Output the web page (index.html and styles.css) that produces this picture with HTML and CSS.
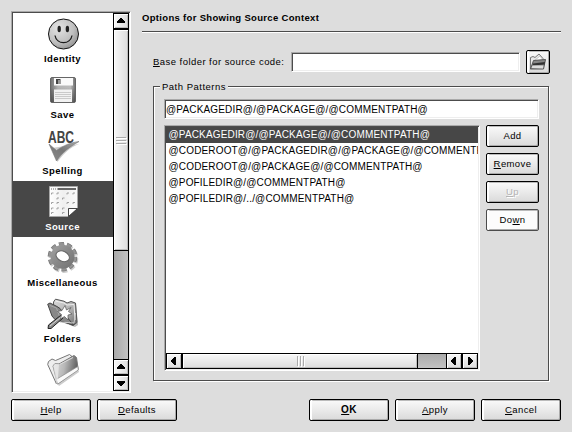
FILE: index.html
```html
<!DOCTYPE html>
<html lang="en">
<head>
<meta charset="utf-8">
<title>Options for Showing Source Context</title>
<link rel="stylesheet" href="styles.css">
</head>
<body>
<div class="dialog">
  <div class="main">
    <div class="sunken sidebar">
      <div class="pages">
        <div class="page">
          <svg class="icon" viewBox="0 0 32 32">
            <defs><radialGradient id="face" cx=".35" cy=".3" r=".8"><stop offset="0" stop-color="#e4e4e4"/><stop offset=".6" stop-color="#c0c0c0"/><stop offset="1" stop-color="#8c8c8c"/></radialGradient></defs>
            <circle cx="16.5" cy="16" r="15" fill="url(#face)" stroke="#111"/>
            <ellipse cx="12.2" cy="11" rx="1.7" ry="3.3" fill="#222"/><ellipse cx="20.4" cy="11" rx="1.7" ry="3.3" fill="#222"/>
            <path d="M8 17.5C9.5 27 23.500 27 25 17.500" fill="none" stroke="#1a1a1a" stroke-width="1.300"/>
          </svg>
          <span class="name">Identity</span>
        </div>
        <div class="page">
          <svg class="icon" viewBox="0 0 32 32">
            <defs><linearGradient id="disk" x1="0" y1="0" x2="1" y2="0"><stop offset="0" stop-color="#707070"/><stop offset=".3" stop-color="#b4b4b4"/><stop offset=".8" stop-color="#bcbcbc"/><stop offset="1" stop-color="#6a6a6a"/></linearGradient>
            <linearGradient id="diskShade" x1="0" y1="0" x2="0" y2="1"><stop offset=".4" stop-color="#333" stop-opacity="0"/><stop offset="1" stop-color="#333" stop-opacity=".55"/></linearGradient></defs>
            <rect x="3.500" y="3.500" width="25" height="25" rx="1.500" fill="url(#disk)" stroke="#666"/>
            <rect x="4" y="4" width="24" height="24" fill="url(#diskShade)"/>
            <rect x="7" y="4" width="19" height="7.500" fill="#fafafa"/>
            <path d="M9 5h4.500v5H9z" fill="#444"/><path d="M11 6h2.500v4H11z" fill="#999"/>
            <rect x="7" y="15.500" width="18" height="12.500" fill="#f2f2f2"/>
            <path d="M8 18.500h16M8 20.500h16M8 22.500h16M8 24.500h16" stroke="#cacaca"/>
          </svg>
          <span class="name">Save</span>
        </div>
        <div class="page">
          <svg class="icon" viewBox="0 0 32 32">
            <defs><linearGradient id="tick" x1="0" y1="1" x2="1" y2="0"><stop offset="0" stop-color="#8c8c8c"/><stop offset=".5" stop-color="#777"/><stop offset="1" stop-color="#aaa"/></linearGradient></defs>
            <path d="M4.500 18L10.500 32L12 30C17 23 24 17 32 14z" fill="#ccc"/>
            <path d="M2 14L9.500 20.500C16 15.500 24 12.500 32 11.500C23 16.500 15 22.500 9.500 31z" fill="url(#tick)" stroke="#777" stroke-width=".6"/>
            <text class="abc" x="1" y="13" textLength="26" lengthAdjust="spacingAndGlyphs">ABC</text>
          </svg>
          <span class="name">Spelling</span>
        </div>
        <div class="page selected">
          <svg class="icon" viewBox="0 0 32 32">
            <defs><linearGradient id="sheet" x1="0" y1="0" x2="1" y2="0"><stop offset="0" stop-color="#fff"/><stop offset=".5" stop-color="#f0f0f0"/><stop offset="1" stop-color="#fafafa"/></linearGradient></defs>
            <path d="M2.500.500H30.500V22.500L21.500 30.500H2.500z" fill="url(#sheet)" stroke="#a8a8a8"/>
            <path d="M4 3H13" stroke="#999" stroke-width="1.500" stroke-dasharray="1 1"/><path d="M11 3H29" stroke="#666" stroke-width="2"/>
            <path d="M4.500 8.500v-1.500h2M10 8.500v-1.500h2M20 8.500v-1.500h2M26 8.500v-1.500h2M10 13.500v-1.500h2M15.500 13.500v-1.500h2M4.500 18v-1.500h2M10 18v-1.500h2M20 18v-1.500h2M26 18v-1.500h2M4.500 23.500v-1.500h2M10 23.500v-1.500h2M15.500 23.500v-1.500h2M4.500 28v-1.500h2M15.500 28v-1.500h2" fill="none" stroke="#999" stroke-width=".9"/>
            <path d="M21.500 30.500V22.500H30.500V31H21.500z" fill="#474747"/>
            <path d="M21.500 30.500V22.500H30.500z" fill="#fff" stroke="#333" stroke-width=".9"/>
          </svg>
          <span class="name">Source</span>
        </div>
        <div class="page">
          <svg class="icon" viewBox="0 0 32 32">
            <defs><linearGradient id="cog" x1="0" y1="0" x2="1" y2="1"><stop offset="0" stop-color="#a4a4a4"/><stop offset=".5" stop-color="#888"/><stop offset="1" stop-color="#707070"/></linearGradient></defs>
            <g transform="translate(15.500 14.700)">
              <circle cx="1" cy="1.500" r="12.300" fill="none" stroke="#ccc" stroke-width="5" stroke-dasharray="4.730 3"/>
              <circle r="12.300" fill="none" stroke="#747474" stroke-width="5" stroke-dasharray="4.730 3"/>
              <circle r="12.300" fill="none" stroke="#949494" stroke-width="3.600" stroke-dasharray="4 3.730" stroke-dashoffset="-.3"/>
              <circle r="12" fill="url(#cog)"/>
              <ellipse rx="7" ry="5" cy="-.5" transform="rotate(25)" fill="#fff" stroke="#666"/>
            </g>
          </svg>
          <span class="name">Miscellaneous</span>
        </div>
        <div class="page">
          <svg class="icon" viewBox="0 0 32 32">
            <defs><linearGradient id="wf" x1="0" y1="0" x2="1" y2="1"><stop offset="0" stop-color="#ddd"/><stop offset=".6" stop-color="#aaa"/><stop offset="1" stop-color="#666"/></linearGradient></defs>
            <path d="M8 4L10 1.500L17 3.500L21 5L25 3.500L29 6L31 27L28 29L9 22z" fill="#bbb"/>
            <path d="M6.500 4L8.500 1.200L17 3.200L20 5L24 3.500L28.500 5L30 24.500L26 27.500L7 19z" fill="url(#wf)" stroke="#555"/>
            <path d="M8.500 3L17 5L20 7L27 6.500L28 22" fill="none" stroke="#eee"/>
            <path d="M.700 6.200L3 5L10 8.500L13 10.500L26.500 27L8 21.500L5 18z" fill="#888" stroke="#444"/>
            <path d="M3 7.500L9.500 10L13 20" fill="none" stroke="#aaa"/>
            <path d="M13 24L27 25L28.500 15" fill="none" stroke="#ccc"/>
            <path d="M1 30.500L1.500 27L13.500 17.500L16 20L4 30.500z" fill="#888" stroke="#222"/>
            <path d="M3 28L14 19" stroke="#d4d4d4"/>
            <path d="M18 7.500L19.500 12L24 9.500L21.500 13.500L25 16L21 17L21 22L17.500 18.500L13.500 21L14.500 16.500L10.500 13.500L15 12.500z" fill="#fff" stroke="#555" stroke-width=".7"/>
          </svg>
          <span class="name">Folders</span>
        </div>
        <div class="page">
          <svg class="icon" viewBox="0 0 32 32">
            <defs><linearGradient id="fold" x1="0" y1=".3" x2="1" y2=".5"><stop offset="0" stop-color="#ddd"/><stop offset=".45" stop-color="#b8b8b8"/><stop offset="1" stop-color="#555"/></linearGradient></defs>
            <path d="M12 32L32 18L31 15L10 29z" fill="#ccc"/>
            <path d="M9.500 30L.700 10.500L1.500 7.500L5 5L8.500 6.500L22.500.500L25 2.500L12 14z" fill="#eee" stroke="#777"/>
            <path d="M6 12L8 9.500L12 10L27 1.500L29.500 3.500L31.200 15.500L10.500 30z" fill="url(#fold)" stroke="#777"/>
            <path d="M12.500 10.500L26 3.500" stroke="#ddd"/>
            <path d="M9 25.500L30.800 12.500L31.300 16L10.800 30z" fill="#fafafa" stroke="#888" stroke-width=".7"/>
            <path d="M6 12L8 9.500L12 10L10.500 29.500L9.500 30z" fill="#eee" fill-opacity=".7"/>
          </svg>
        </div>
      </div>
      <div class="scroll vertical">
        <div class="arrow"><svg viewBox="0 0 14 14"><path d="M6 4h2v1h1v1h1v1h1v2H3V7h1V6h1V5h1z"/></svg></div>
        <div class="thumb"><i></i><i></i><i></i></div>
        <div class="groove"></div>
        <div class="arrow up"><svg viewBox="0 0 14 14"><path d="M6 4h2v1h1v1h1v1h1v2H3V7h1V6h1V5h1z"/></svg></div>
        <div class="arrow"><svg viewBox="0 0 14 14"><path d="M3 5h8v2h-1v1H9v1H8v1H6V9H5V8H4V7H3z"/></svg></div>
      </div>
    </div>
    <div class="content">
      <h1>Options for Showing Source Context</h1>
      <div class="base-row">
        <label class="caption"><u>B</u>ase folder for source code:</label>
        <div class="sunken field"></div>
        <div class="button browse">
          <svg viewBox="0 0 18 18">
            <path d="M1.500 16V4.500L4 3.500L6 4.500L10 1L14 5.500L13 9z" fill="#e8e8e8" stroke="#777"/>
            <path d="M5 8L11 3L14 7z" fill="#fff" stroke="#aaa" stroke-width=".6"/>
            <path d="M1.500 16L4.500 7.500L16.500 6.500L14.500 16z" fill="#888" stroke="#555"/>
            <path d="M4 10.500L16 9L15.500 11.500L3.500 12.500z" fill="#333"/>
            <path d="M2.500 15L3.500 12.500L14.500 12.500L14 15.500z" fill="#ddd"/>
          </svg>
        </div>
      </div>
      <div class="group">
        <div class="legend">Path Patterns</div>
        <div class="sunken field pattern">@PACKAGEDIR@/@PACKAGE@/@COMMENTPATH@</div>
        <div class="editor">
          <div class="sunken list">
            <div class="rows">
              <div class="row current">@PACKAGEDIR@/@PACKAGE@/@COMMENTPATH@</div>
              <div class="row">@CODEROOT@/@PACKAGEDIR@/@PACKAGE@/@COMMENTPATH@</div>
              <div class="row">@CODEROOT@/@PACKAGE@/@COMMENTPATH@</div>
              <div class="row">@POFILEDIR@/@COMMENTPATH@</div>
              <div class="row">@POFILEDIR@/../@COMMENTPATH@</div>
            </div>
            <div class="scroll horizontal">
              <div class="arrow"><svg viewBox="0 0 14 14"><path d="M9 3v8H7v-1H6V9H5V8H4V6h1V5h1V4h1V3z"/></svg></div>
              <div class="thumb"><i></i><i></i><i></i></div>
              <div class="groove"></div>
              <div class="arrow left"><svg viewBox="0 0 14 14"><path d="M9 3v8H7v-1H6V9H5V8H4V6h1V5h1V4h1V3z"/></svg></div>
              <div class="arrow"><svg viewBox="0 0 14 14"><path d="M5 3v8h2v-1h1V9h1V8h1V6H9V5H8V4H7V3z"/></svg></div>
            </div>
          </div>
          <div class="side-buttons">
            <div class="button">Add</div>
            <div class="button"><span><u>R</u>emove</span></div>
            <div class="button disabled"><span><u>U</u>p</span></div>
            <div class="button hover"><span>Do<u>w</u>n</span></div>
          </div>
        </div>
      </div>
    </div>
  </div>
  <div class="footer">
    <div class="button"><span><u>H</u>elp</span></div>
    <div class="button"><span><u>D</u>efaults</span></div>
    <div class="button default"><span><u>O</u>K</span></div>
    <div class="button"><span><u>A</u>pply</span></div>
    <div class="button"><span><u>C</u>ancel</span></div>
  </div>
</div>
</body>
</html>
```

FILE: styles.css
```css
* { box-sizing: border-box; }
body {
  margin: 0;
  background: #ddd;
  color: #000;
  font: 9.5px/16px "Liberation Sans", Arial, sans-serif;
  white-space: nowrap;
}
.dialog { width: 572px; height: 432px; padding: 11px; overflow: hidden; }
.main { display: flex; height: 382px; }
u { text-decoration: underline; text-underline-offset: 1px; text-decoration-thickness: 1px; text-decoration-skip-ink: none; }

.sunken {
  background: #fff;
  border: 1px solid;
  border-color: #aaa #fff #fff #aaa;
  box-shadow: inset 1px 1px 0 #4c4c4c, inset -1px -1px 0 #eee;
  padding: 1px;
}

.sidebar { display: flex; width: 120px; height: 382px; }
.pages { width: 100px; height: 378px; overflow: hidden; }
.page { display: flex; flex-direction: column; align-items: center; height: 56px; padding-top: 5px; }
.icon { width: 32px; height: 32px; flex: none; overflow: visible; }
.name { font-weight: bold; line-height: 12px; margin-top: 3px; letter-spacing: .42px; padding-right: 1px; }
.selected { background: #474747; color: #fff; }
.abc { font: bold 16.5px "Liberation Sans", Arial, sans-serif; fill: #444; }

.scroll { display: flex; border: 1px solid #000; }
.scroll > * { background: linear-gradient(90deg, #f8f8f8, #dcdcdc); flex: none; }
.scroll svg { display: block; width: 14px; height: 14px; }
.arrow { width: 14px; height: 14px; box-shadow: inset 1px 1px 0 #fff, inset -1px -1px 0 #bbb; }
.thumb { display: flex; justify-content: center; align-items: center; gap: 2px; box-shadow: inset 1px 1px 0 #fff, inset -1px -1px 0 #bbb; }
.thumb i { background: #aaa; box-shadow: 1px 1px 0 #fff; }

.vertical { flex-direction: column; width: 16px; height: 378px; background: #000; }
.vertical .thumb { height: 220px; margin-top: 2px; flex-direction: column; }
.vertical .thumb i { width: 10px; height: 1px; }
.vertical .groove { flex: 1; background: linear-gradient(90deg, #aaa, #c2c2c2); border: solid #000; border-width: 1px 0; }
.vertical .up { margin-bottom: 2px; }

.horizontal { width: 312px; height: 16px; background: #000; }
.horizontal > * { background: linear-gradient(#f8f8f8, #dcdcdc); }
.horizontal .thumb { width: 234px; margin-left: 2px; }
.horizontal .thumb i { width: 1px; height: 10px; }
.horizontal .groove { flex: 1; background: linear-gradient(#aaa, #c2c2c2); border: solid #000; border-width: 0 1px; }
.horizontal .left { margin-right: 2px; }

.content { width: 419px; margin-left: 11px; }
h1 {
  margin: 0;
  height: 22px;
  font-size: 9.5px;
  line-height: 14px;
  letter-spacing: .32px;
  border-bottom: 1px solid #fff;
  box-shadow: inset 0 -1px 0 #4c4c4c;
}
.base-row { display: flex; align-items: center; height: 24px; margin: 17px 0 0 11px; }
.caption { width: 138px; letter-spacing: .45px; }
.field { height: 20px; }
.base-row .field { width: 229px; }
.group {
  display: flex;
  flex-direction: column;
  width: 396px;
  height: 295px;
  margin: 12px 0 0 11px;
  padding-left: 10px;
  border: 1px solid #4c4c4c;
  box-shadow: inset 1px 1px 0 #fff, 1px 1px 0 #fff;
}
.legend { width: 68px; height: 12px; margin: -6px 0 6px -4px; padding-left: 2px; line-height: 12px; letter-spacing: .5px; background: #ddd; }
.pattern { width: 375px; padding-left: 1px; font-size: 10px; line-height: 18px; letter-spacing: .17px; }
.editor { display: flex; gap: 6px; margin-top: 6px; }
.list { width: 316px; height: 246px; }
.rows { width: 312px; height: 226px; overflow: hidden; }
.row { height: 16px; padding-left: 2.5px; font-size: 10px; letter-spacing: .16px; }
.current { background: #474747; color: #fff; }
.side-buttons { display: flex; flex-direction: column; gap: 6px; width: 53px; }

.button {
  display: flex;
  align-items: center;
  justify-content: center;
  height: 22px;
  border: 1px solid #000;
  border-radius: 2px;
  background: linear-gradient(#fafafa, #dadada);
  box-shadow: inset 2px 0 0 #fff, inset -1px -1px 0 #aaa, inset 0 1px 0 #bbb;
  letter-spacing: .4px;
}
.browse { width: 24px; height: 24px; margin-left: 6px; }
.browse svg { width: 18px; height: 18px; }
.disabled { color: #b4b4b4; text-shadow: 1px 1px 0 #fff; }
.hover { background: #fcfcfc; border-color: #4c4c4c; }
.footer { display: flex; gap: 6px; margin-top: 6px; width: 550px; }
.footer .button { width: 80px; }
.footer .default { margin-left: auto; font-weight: bold; font-size: 10px; border-color: #000; }
```
